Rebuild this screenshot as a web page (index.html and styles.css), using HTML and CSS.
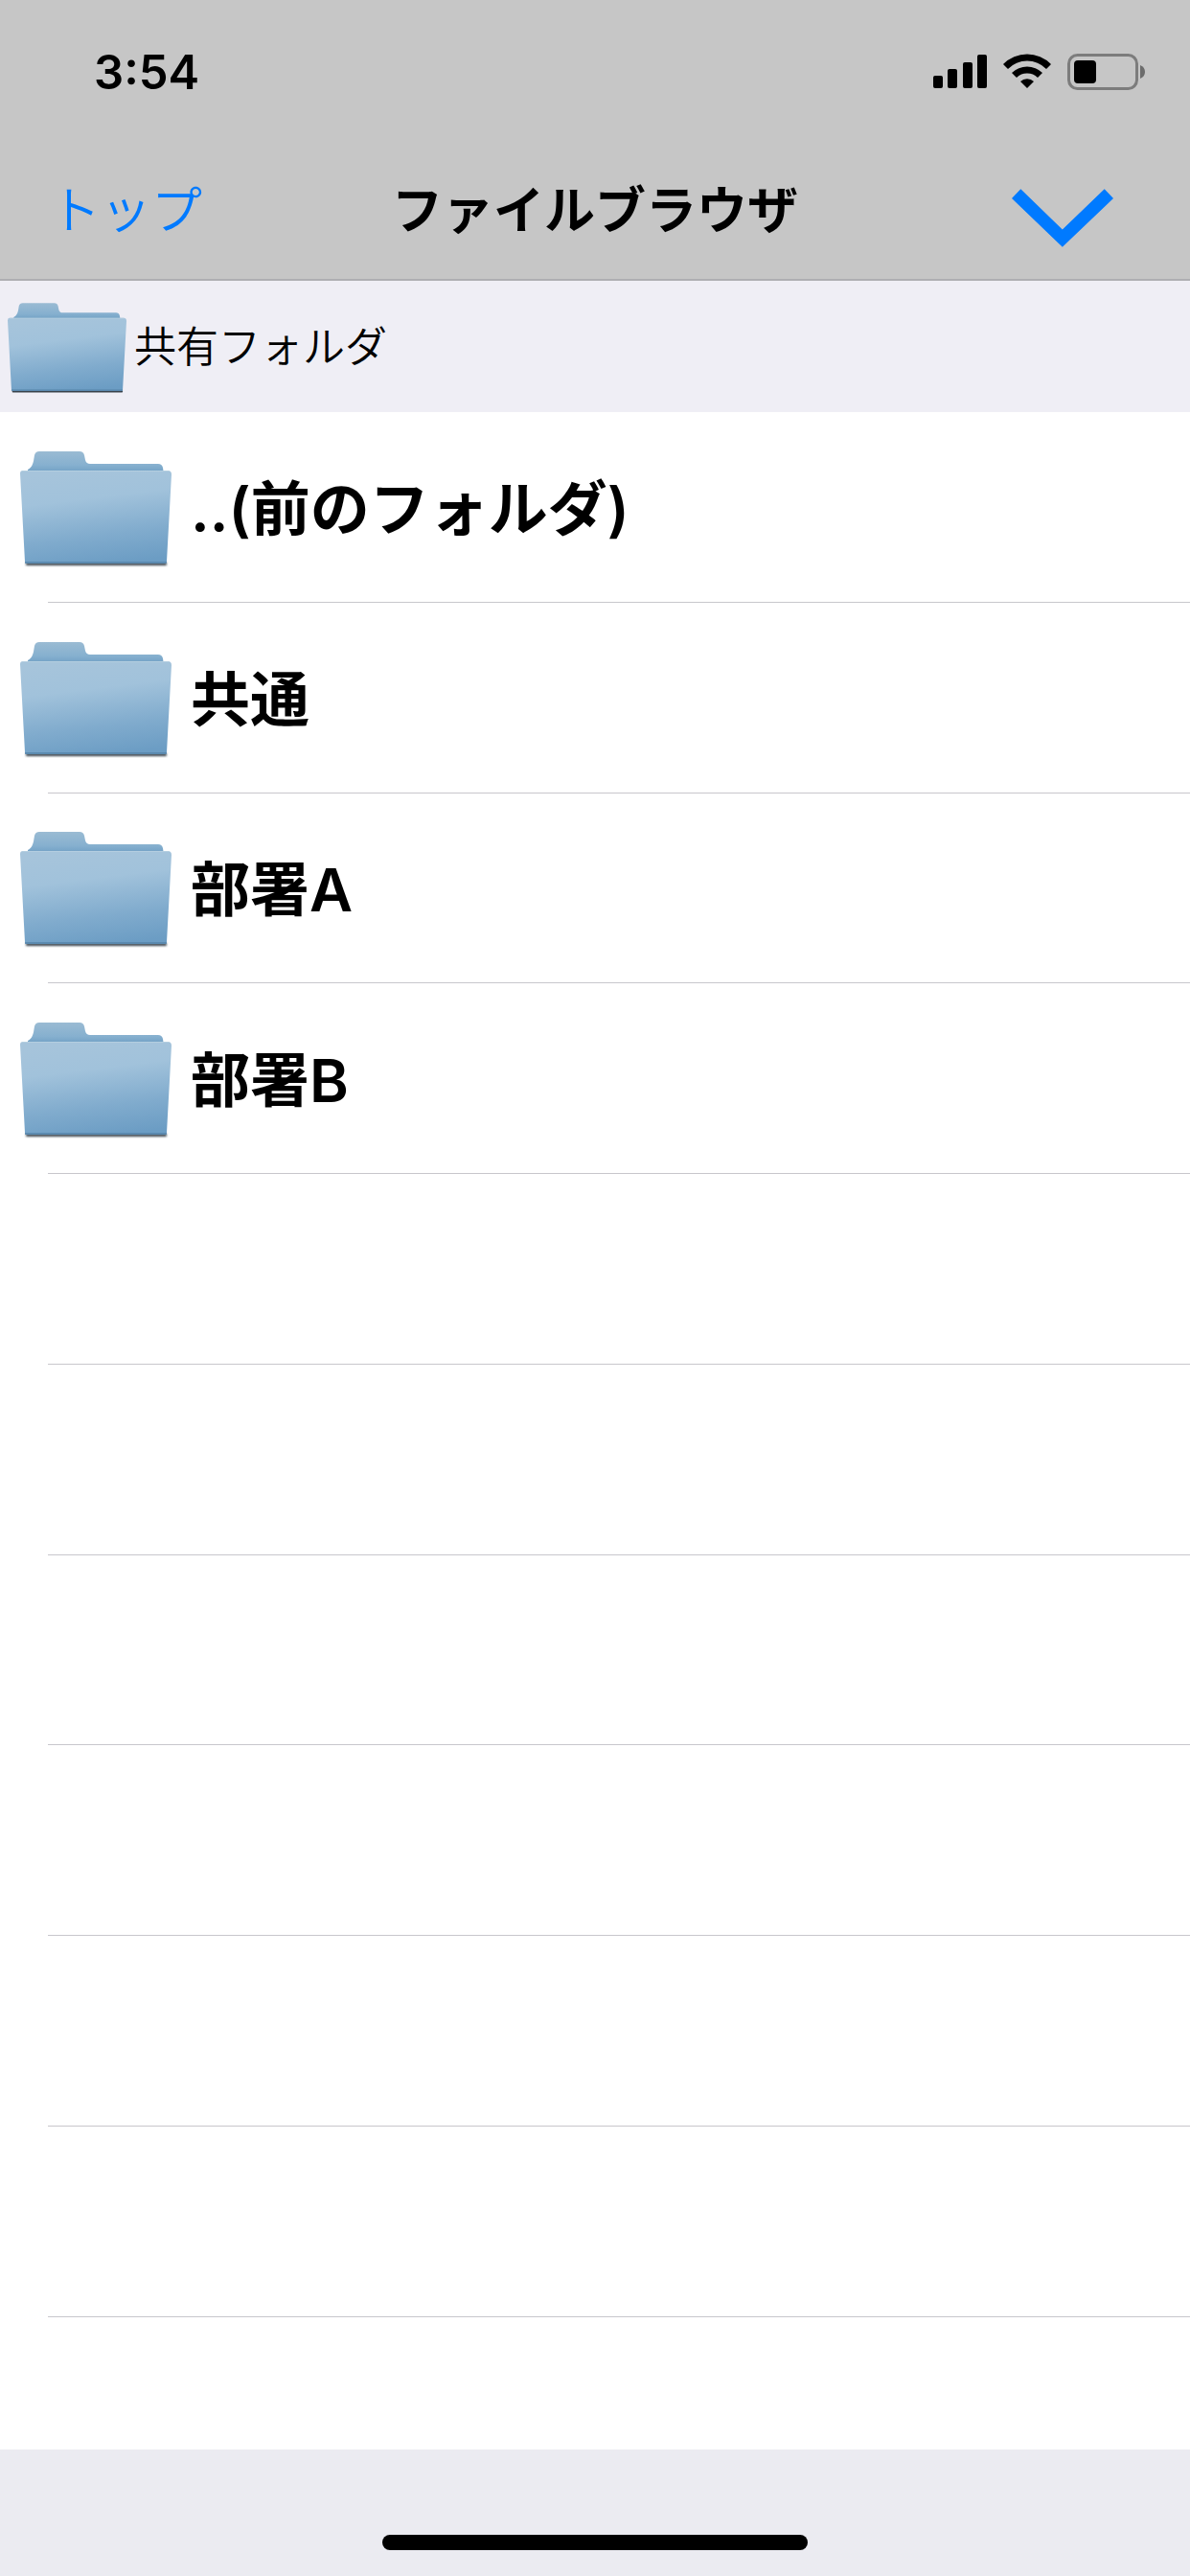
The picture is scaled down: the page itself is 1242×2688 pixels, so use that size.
FILE: index.html
```html
<!DOCTYPE html>
<html lang="ja">
<head>
<meta charset="utf-8">
<meta name="viewport" content="width=device-width">
<title>ファイルブラウザ</title>
<link rel="stylesheet" href="styles.css">
</head>
<body>
<svg class="defs" aria-hidden="true">
  <defs>
    <linearGradient id="front" x1="0.4" y1="0" x2="0.6" y2="1">
      <stop offset="0" stop-color="#a6c4db"/>
      <stop offset="0.3" stop-color="#a1c2db"/>
      <stop offset="0.7" stop-color="#80abcd"/>
      <stop offset="1" stop-color="#6c9dc4"/>
    </linearGradient>
    <linearGradient id="back" x1="0" y1="0" x2="0" y2="1">
      <stop offset="0" stop-color="#9abbd3"/>
      <stop offset="0.6" stop-color="#86b0cf"/>
      <stop offset="1" stop-color="#6b9cc2"/>
    </linearGradient>
    <filter id="soft" x="-5%" y="-200%" width="110%" height="500%">
      <feGaussianBlur stdDeviation="1"/>
    </filter>
  </defs>
  <symbol id="folder" viewBox="0 0 158 122">
    <rect x="6" y="116" width="147" height="3" rx="1" fill="#39424c" filter="url(#soft)"/>
    <path d="M8 24V19C12 17 13 14 14 10L15 4Q16 0 20 0H62Q66 0 67 4L68 9Q69 13 73 13H144Q148 13 149 17L150 24Z" fill="url(#back)"/>
    <path d="M0 23Q0 20 3 20H154Q158 20 158 24L153 115Q153 117 151 117H7Q5 117 5 115Z" fill="url(#front)"/>
    <path d="M2 20.500H155" stroke="#b4cee0" stroke-width="1"/>
    <path d="M5 116H153" stroke="#5583a8" stroke-width="1.500"/>
  </symbol>
</svg>
<div class="screen">
  <header class="top">
    <div class="status">
      <time class="clock">3:54</time>
      <svg class="indicators" viewBox="0 0 222 40" role="img" aria-label="電波、Wi-Fi、バッテリー">
        <rect x="0" y="23" width="10" height="13" rx="2"/>
        <rect x="15" y="16" width="10" height="20" rx="2"/>
        <rect x="31" y="9" width="10" height="27" rx="2"/>
        <rect x="46" y="1" width="10" height="35" rx="2"/>
        <path d="M73 11A35 35 0 0 1 123 11L118 16A28 28 0 0 0 78 16Z"/>
        <path d="M82 20A23 23 0 0 1 114 20L109 25A16 16 0 0 0 87 25Z"/>
        <path d="M91 29A10 10 0 0 1 105 29L98 36Z"/>
        <rect x="141.500" y="1.500" width="71" height="35" rx="9" fill="none" stroke="#7c7c7c" stroke-width="3"/>
        <rect x="147" y="7" width="23" height="24" rx="4"/>
        <path d="M216 12Q221 14 221 19T216 26Z" fill="#6c6c6c"/>
      </svg>
    </div>
    <nav class="bar">
      <button class="back" type="button">トップ</button>
      <h1 class="title">ファイルブラウザ</h1>
      <button class="menu" type="button" aria-label="メニュー">
        <svg class="chevron" viewBox="0 0 319 182"><path d="M0 29L28 0L159 127L291 0L319 29L159 182Z"/></svg>
      </button>
    </nav>
  </header>
  <div class="path">
    <svg class="path-icon" aria-hidden="true"><use href="#folder"/></svg>
    <span>共有フォルダ</span>
  </div>
  <ul class="list">
    <li class="row"><a class="item" href="#"><svg class="icon" aria-hidden="true"><use href="#folder"/></svg><span>..(前のフォルダ)</span></a></li>
    <li class="row"><a class="item" href="#"><svg class="icon" aria-hidden="true"><use href="#folder"/></svg><span>共通</span></a></li>
    <li class="row"><a class="item" href="#"><svg class="icon" aria-hidden="true"><use href="#folder"/></svg><span>部署A</span></a></li>
    <li class="row"><a class="item" href="#"><svg class="icon" aria-hidden="true"><use href="#folder"/></svg><span>部署B</span></a></li>
    <li class="row"></li>
    <li class="row"></li>
    <li class="row"></li>
    <li class="row"></li>
    <li class="row"></li>
    <li class="row"></li>
    <li class="rest"></li>
  </ul>
  <footer class="foot"><div class="home"></div></footer>
</div>
</body>
</html>
```
FILE: styles.css
```css
* { box-sizing: border-box; }

body {
  margin: 0;
  background: #fff;
  color: #000;
  font-family: Inter, "Noto Sans CJK JP", sans-serif;
}

button {
  padding: 0;
  border: 0;
  background: none;
  font: inherit;
  cursor: pointer;
}

svg { display: block; flex: none; }

.defs { position: absolute; width: 0; height: 0; }

.screen {
  display: flex;
  flex-direction: column;
  min-height: 100vh;
}

.top {
  background: #c6c6c6;
  border-bottom: 2px solid #aeaeb2;
}

.status {
  display: flex;
  align-items: center;
  justify-content: space-between;
  height: 152px;
  padding: 0 46px 0 98px;
}

.clock {
  font-size: 49px;
  font-weight: 600;
  line-height: 60px;
}

.indicators { width: 222px; height: 40px; }

.bar {
  display: grid;
  grid-template-columns: 1fr auto 1fr;
  align-items: center;
  height: 139px;
  padding: 0 52px 4px;
}

.back {
  justify-self: start;
  color: #007aff;
  font-size: 53px;
  font-weight: 350;
  line-height: 72px;
}

.title {
  margin: 0;
  font-size: 53px;
  font-weight: 600;
  line-height: 72px;
}

.menu {
  justify-self: end;
  padding: 16px 28px 0;
}

.chevron { width: 106px; height: 61px; fill: #007aff; }

.path {
  display: flex;
  align-items: center;
  gap: 8px;
  height: 137px;
  padding-left: 8px;
  background: #efeef5;
  font-size: 44px;
  font-weight: 350;
  line-height: 60px;
}

.path-icon { width: 124px; height: 96px; margin-top: 4px; }

.list {
  display: flex;
  flex: 1;
  flex-direction: column;
  margin: 0;
  padding: 0 0 0 50px;
  list-style: none;
}

.row {
  display: flex;
  flex: 10 0 0px;
  min-height: 140px;
  border-bottom: 1px solid #c8c7cc;
}

.rest { flex: 7 0 0px; }

.item {
  display: flex;
  flex: 1;
  align-items: center;
  gap: 20px;
  margin-left: -29px;
  padding-top: 6px;
  color: inherit;
  font-size: 62px;
  font-weight: 600;
  line-height: 84px;
  text-decoration: none;
}

.icon { width: 158px; height: 122px; }

.foot {
  display: flex;
  justify-content: center;
  align-items: flex-end;
  height: 132px;
  padding-bottom: 27px;
  background: #ebebf1;
}

.home {
  width: 444px;
  height: 16px;
  border-radius: 8px;
  background: #000;
}
```
